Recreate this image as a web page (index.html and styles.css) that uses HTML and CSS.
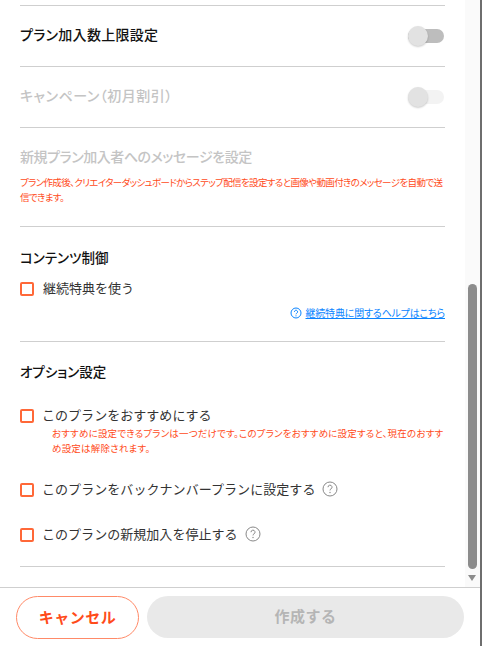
FILE: index.html
```html
<!DOCTYPE html>
<html lang="ja">
<head>
    <meta charset="UTF-8">
    <title>プラン設定</title>
    <link rel="stylesheet" href="styles.css">
</head>
<body>
    <div class="window">
        <div class="body">
            <div class="content">
                <div class="row toggle-row">
                    <p class="row-title wide">プラン加入数上限設定</p>
                    <span class="toggle"><span class="knob"></span></span>
                </div>
                <div class="row toggle-row">
                    <p class="row-title disabled wider">キャンペーン（初月割引）</p>
                    <span class="toggle off"><span class="knob"></span></span>
                </div>
                <div class="row message-row">
                    <p class="row-title disabled narrow">新規プラン加入者へのメッセージを設定</p>
                    <p class="note">プラン作成後、クリエイターダッシュボードからステップ配信を設定すると画像や動画付きのメッセージを自動で送信できます。</p>
                </div>
                <div class="row control-row">
                    <h3 class="section-title">コンテンツ制御</h3>
                    <label class="check"><span class="box"></span>継続特典を使う</label>
                    <div class="help-link">
                        <svg class="help-icon" width="12" height="12" viewBox="0 0 12 12">
                            <circle cx="6" cy="6" r="5" fill="none" stroke="#0a84ff" stroke-width="1"/>
                            <path d="M4.4 4.8a1.6 1.6 0 1 1 2.4 1.4c-.5.3-.8.6-.8 1.1" fill="none" stroke="#0a84ff" stroke-width="1"/>
                            <circle cx="6" cy="8.8" r=".6" fill="#0a84ff"/>
                        </svg>
                        <a href="#">継続特典に関するヘルプはこちら</a>
                    </div>
                </div>
                <div class="row option-row">
                    <h3 class="section-title">オプション設定</h3>
                    <div class="option first">
                        <label class="check"><span class="box"></span>このプランをおすすめにする</label>
                        <p class="note indent">おすすめに設定できるプランは一つだけです。このプランをおすすめに設定すると、現在のおすすめ設定は解除されます。</p>
                    </div>
                    <div class="option second">
                        <label class="check"><span class="box"></span>このプランをバックナンバープランに設定する
                            <svg class="hint" width="16" height="16" viewBox="0 0 16 16">
                                <circle cx="8" cy="8" r="7" fill="none" stroke="#888" stroke-width="1"/>
                                <path d="M6 6.2a2 2 0 1 1 3 1.7c-.7.4-1 .8-1 1.5" fill="none" stroke="#888" stroke-width="1"/>
                                <circle cx="8" cy="11.5" r=".7" fill="#888"/>
                            </svg>
                        </label>
                    </div>
                    <div class="option">
                        <label class="check"><span class="box"></span>このプランの新規加入を停止する
                            <svg class="hint" width="16" height="16" viewBox="0 0 16 16">
                                <circle cx="8" cy="8" r="7" fill="none" stroke="#888" stroke-width="1"/>
                                <path d="M6 6.2a2 2 0 1 1 3 1.7c-.7.4-1 .8-1 1.5" fill="none" stroke="#888" stroke-width="1"/>
                                <circle cx="8" cy="11.5" r=".7" fill="#888"/>
                            </svg>
                        </label>
                    </div>
                </div>
            </div>
            <!-- スクロールバー -->
            <div class="scrollbar">
                <div class="thumb"></div>
                <div class="arrow"></div>
            </div>
        </div>
        <div class="footer">
            <button class="btn cancel">キャンセル</button>
            <button class="btn submit">作成する</button>
        </div>
    </div>
</body>
</html>
```

FILE: styles.css
```css
* {
    box-sizing: border-box;
}
html, body {
    margin: 0;
    padding: 0;
    overflow: hidden;
}
p, h3 {
    margin: 0;
    padding: 0;
}
.window {
    width: 482px;
    height: 646px;
    display: flex;
    flex-direction: column;
    background-color: #fff;
    border-right: 2px solid #6e6e6e;
    font-family: "Noto Sans CJK JP", "Noto Sans", sans-serif;
    color: #222;
}
.body {
    height: 587px;
    display: flex;
    overflow: hidden;
}
.content {
    flex: 1;
    padding: 5px 20px 0;
}
.row {
    border-top: 1px solid #cfcfcf;
}
.toggle-row {
    height: 61px;
    display: flex;
    justify-content: space-between;
    align-items: center;
}
.toggle-row .row-title {
    padding-bottom: 4px;
}
.row-title {
    font-size: 14px;
    font-weight: 500;
    line-height: 20px;
    color: #111;
    font-feature-settings: "palt";
}
.row-title.disabled {
    color: #c4c4c4;
}
.row-title.wide {
    letter-spacing: 0.3px;
}
.row-title.wider {
    letter-spacing: 0.5px;
}
.row-title.narrow {
    letter-spacing: -0.45px;
}
.toggle {
    width: 36px;
    height: 14px;
    border-radius: 7px;
    background-color: #bdbdbd;
    display: flex;
    align-items: center;
    margin-right: 1px;
}
.toggle.off {
    background-color: #f3f3f3;
}
.knob {
    width: 20px;
    height: 20px;
    border-radius: 50%;
    background-color: #e2e2e2;
    box-shadow: 0 1px 2px rgba(0, 0, 0, 0.2);
}
.message-row {
    height: 99px;
    padding-top: 18px;
}
.note {
    font-size: 9.5px;
    line-height: 15px;
    letter-spacing: -0.63px;
    color: #ff4b1a;
    font-feature-settings: "palt";
}
.message-row .note {
    margin-top: 9px;
}
.control-row {
    height: 115px;
    padding-top: 20px;
}
.section-title {
    font-size: 13.5px;
    font-weight: 500;
    line-height: 20px;
    color: #111;
    font-feature-settings: "palt";
}
.check {
    display: flex;
    align-items: center;
    font-size: 13px;
    line-height: 18px;
    color: #333;
}
.box {
    width: 14px;
    height: 14px;
    margin: 2px 9px 0 0;
    border: 2px solid #ff6838;
    border-radius: 2px;
    background-color: #fff;
}
.control-row .check {
    margin-top: 12px;
}
.help-link {
    margin-top: 8px;
    display: flex;
    justify-content: flex-end;
    align-items: center;
    gap: 4px;
    font-size: 10px;
    line-height: 16px;
}
.help-link a {
    color: #0a84ff;
    letter-spacing: -0.2px;
    font-feature-settings: "palt";
}
.option-row {
    height: 226px;
    border-bottom: 1px solid #cfcfcf;
    padding-top: 19px;
}
.option {
    margin-top: 27px;
}
.option.first {
    margin-top: 25px;
}
.option.second {
    margin-top: 24px;
}
.option .box {
    margin-right: 8px;
}
.option .check {
    letter-spacing: 0.04px;
}
.option.second .check {
    letter-spacing: 0.06px;
}
.note.indent {
    margin-left: 32px;
    margin-top: 2px;
    letter-spacing: 0.2px;
}
.hint {
    margin-left: 7px;
}
.scrollbar {
    width: 15px;
    height: 587px;
    background-color: #fafafa;
    padding: 284px 3px 0;
}
.thumb {
    width: 9px;
    height: 285px;
    border-radius: 5px;
    background-color: #8c8c8c;
}
.arrow {
    width: 0;
    height: 0;
    margin: 6px 0 0;
    border-left: 4.5px solid transparent;
    border-right: 4.5px solid transparent;
    border-top: 6px solid #8c8c8c;
}
.footer {
    height: 59px;
    border-top: 1px solid #cfcfcf;
    padding: 8px 16px 0;
    display: flex;
    gap: 8px;
}
.btn {
    height: 43px;
    border-radius: 22px;
    font-family: inherit;
    font-size: 15px;
    font-weight: 700;
    letter-spacing: 0.5px;
}
.cancel {
    width: 123px;
    padding: 0 0 2px;
    background-color: #fff;
    border: 1px solid #ff8a68;
    color: #ff4b1a;
}
.submit {
    width: 317px;
    height: 42px;
    padding: 0 0 3px;
    background-color: #e9e9e9;
    border: none;
    color: #b5b5b5;
}
```
